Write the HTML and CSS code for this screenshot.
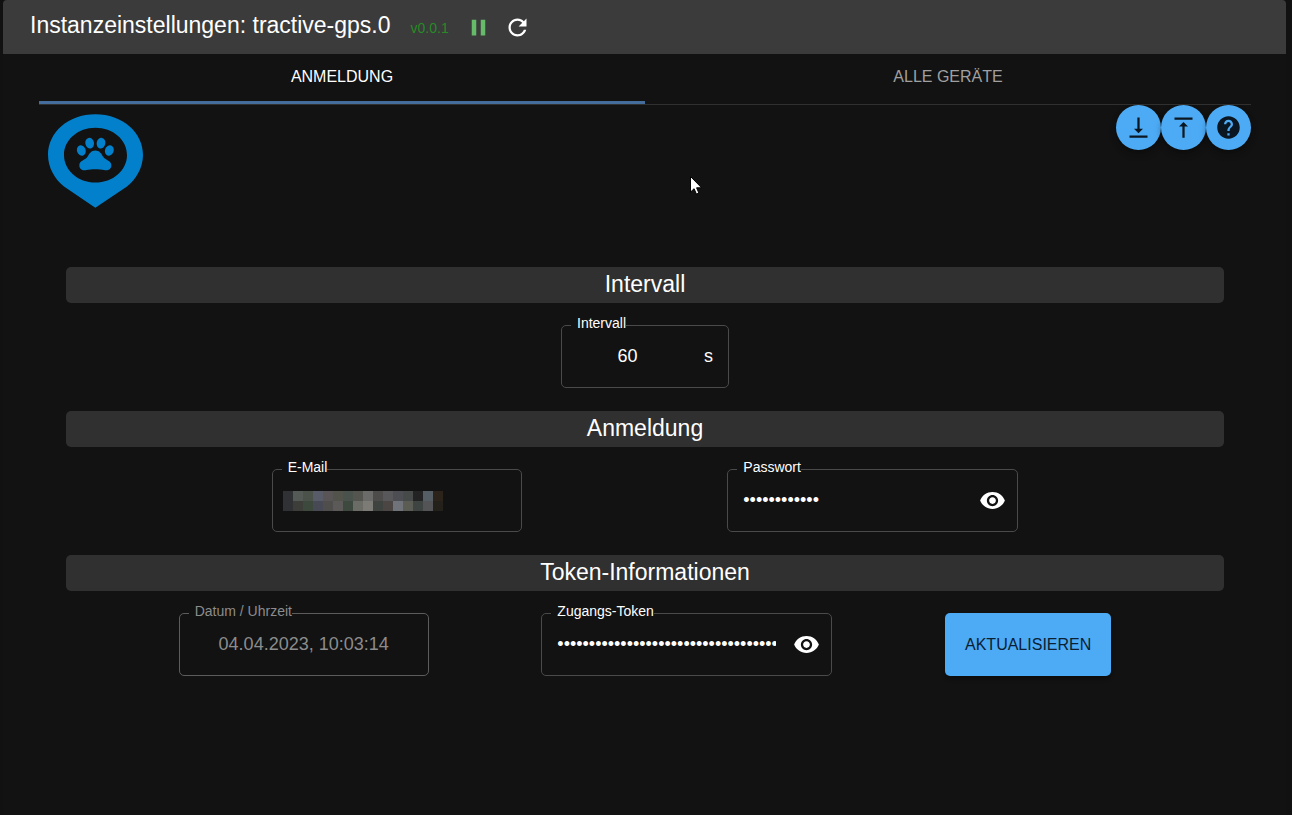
FILE: index.html
```html
<!DOCTYPE html>
<html lang="de">
<head>
<meta charset="utf-8">
<meta name="viewport" content="width=device-width, initial-scale=1">
<title>Instanzeinstellungen: tractive-gps.0</title>
<link rel="stylesheet" href="styles.css">
</head>
<body>
<div class="shell">
  <header class="header">
    <h1 class="title">Instanzeinstellungen: tractive-gps.0</h1>
    <span class="version">v0.0.1</span>
    <button class="icon-button pause" type="button" aria-label="Pause"><svg class="icon" viewBox="0 0 24 24"><path d="M6 19h4V5H6v14zm8-14v14h4V5h-4z"/></svg></button>
    <button class="icon-button" type="button" aria-label="Neu starten"><svg class="icon" viewBox="0 0 24 24"><path d="M17.65 6.35C16.2 4.9 14.21 4 12 4c-4.42 0-7.99 3.58-7.99 8s3.57 8 7.99 8c3.73 0 6.84-2.55 7.73-6h-2.08c-.82 2.33-3.04 4-5.65 4-3.31 0-6-2.69-6-6s2.69-6 6-6c1.66 0 3.14.69 4.22 1.78L13 11h7V4l-2.35 2.35z"/></svg></button>
  </header>

  <main class="content">
    <div class="tabs" role="tablist">
      <button class="tab tab-active" type="button" role="tab" aria-selected="true">ANMELDUNG</button>
      <button class="tab" type="button" role="tab" aria-selected="false">ALLE GERÄTE</button>
    </div>

    <div class="intro">
      <svg class="logo" viewBox="0 0 285 281" role="img" aria-label="Tractive GPS">
        <path fill-rule="evenodd" d="M142 0C224 0 285 55 285 122C285 160 265 195 237 217L142 281L48 217C20 195 0 160 0 122C0 55 60 0 142 0ZM142 41C90 41 48 77 48 123C48 168 90 205 142 205C195 205 237 168 237 123C237 77 195 41 142 41Z"/>
        <ellipse cx="100" cy="109" rx="13" ry="16" transform="rotate(-20 100 109)"/>
        <ellipse cx="125" cy="87" rx="13" ry="16" transform="rotate(-12 125 87)"/>
        <ellipse cx="159" cy="87" rx="13" ry="16" transform="rotate(12 159 87)"/>
        <ellipse cx="184" cy="109" rx="13" ry="16" transform="rotate(20 184 109)"/>
        <path d="M142 109C154 109 160 118 165 127C171 138 190 139 190 153C190 164 182 169 172 168C160 166 152 165 142 165C132 165 124 166 112 168C102 169 94 164 94 153C94 139 113 138 119 127C124 118 130 109 142 109Z"/>
      </svg>
      <div class="actions">
        <button class="fab" type="button" aria-label="Konfiguration speichern"><svg class="icon" viewBox="0 0 24 24"><path d="M16 13h-3V3h-2v10H8l4 4 4-4zM4 19v2h16v-2H4z"/></svg></button>
        <button class="fab" type="button" aria-label="Konfiguration laden"><svg class="icon" viewBox="0 0 24 24"><path d="M8 11h3v10h2V11h3l-4-4-4 4zM4 3v2h16V3H4z"/></svg></button>
        <button class="fab" type="button" aria-label="Hilfe"><svg class="icon" viewBox="0 0 24 24"><path d="M12 2C6.48 2 2 6.48 2 12s4.48 10 10 10 10-4.48 10-10S17.52 2 12 2zm1 17h-2v-2h2v2zm2.07-7.75l-.9.92C13.45 12.9 13 13.5 13 15h-2v-.5c0-1.1.45-2.1 1.17-2.83l1.24-1.26c.37-.36.59-.86.59-1.41 0-1.1-.9-2-2-2s-2 .9-2 2H8c0-2.21 1.79-4 4-4s4 1.79 4 4c0 .88-.36 1.68-.93 2.25z"/></svg></button>
      </div>
    </div>

    <form class="form">
      <section>
        <h2 class="section-title">Intervall</h2>
        <div class="row">
          <div class="field field-small">
            <label class="label" for="interval">Intervall</label>
            <input class="input centered" id="interval" type="text" inputmode="numeric" value="60">
            <span class="unit">s</span>
          </div>
        </div>
      </section>

      <section>
        <h2 class="section-title">Anmeldung</h2>
        <div class="row">
          <div class="field field-medium">
            <label class="label" for="email">E-Mail</label>
            <input class="input" id="email" type="email">
            <svg class="mosaic" viewBox="0 0 16 2" shape-rendering="crispEdges" aria-hidden="true">
              <path fill="#2f3134" d="M0 0h1v2h-1z"/>
              <path fill="#545a56" d="M1 0h1v1h-1z"/><path fill="#4b524a" d="M2 0h1v1h-1z"/><path fill="#585c68" d="M3 0h1v1h-1z"/><path fill="#595556" d="M4 0h1v1h-1z"/><path fill="#52534b" d="M5 0h1v1h-1z"/><path fill="#4a524d" d="M6 0h1v1h-1z"/><path fill="#55554f" d="M7 0h1v1h-1z"/><path fill="#6b6b69" d="M8 0h1v1h-1z"/><path fill="#4e4c4b" d="M9 0h1v1h-1z"/><path fill="#58585a" d="M10 0h1v1h-1z"/><path fill="#4c4e54" d="M11 0h1v1h-1z"/><path fill="#464a48" d="M12 0h1v1h-1z"/><path fill="#232323" d="M13 0h1v1h-1z"/><path fill="#555d65" d="M14 0h1v1h-1z"/><path fill="#2c241b" d="M15 0h1v1h-1z"/>
              <path fill="#3d3e39" d="M1 1h1v1h-1z"/><path fill="#3e493e" d="M2 1h1v1h-1z"/><path fill="#474a54" d="M3 1h1v1h-1z"/><path fill="#504d4d" d="M4 1h1v1h-1z"/><path fill="#5c5959" d="M5 1h1v1h-1z"/><path fill="#3d493e" d="M6 1h1v1h-1z"/><path fill="#6b6c66" d="M7 1h1v1h-1z"/><path fill="#7c7b76" d="M8 1h1v1h-1z"/><path fill="#3f433f" d="M9 1h1v1h-1z"/><path fill="#4b4543" d="M10 1h1v1h-1z"/><path fill="#707379" d="M11 1h1v1h-1z"/><path fill="#5b5c53" d="M12 1h1v1h-1z"/><path fill="#3e4442" d="M13 1h1v1h-1z"/><path fill="#545456" d="M14 1h1v1h-1z"/><path fill="#24211b" d="M15 1h1v1h-1z"/>
            </svg>
          </div>
          <div class="field field-large">
            <label class="label" for="password">Passwort</label>
            <input class="input" id="password" type="password" value="abcdefghijkl">
            <button class="icon-button" type="button" aria-label="Passwort anzeigen"><svg class="icon" viewBox="0 0 24 24"><path d="M12 4.5C7 4.5 2.73 7.61 1 12c1.73 4.39 6 7.5 11 7.5s9.27-3.11 11-7.5c-1.73-4.39-6-7.5-11-7.5zM12 17c-2.76 0-5-2.24-5-5s2.24-5 5-5 5 2.24 5 5-2.24 5-5 5zm0-8c-1.66 0-3 1.34-3 3s1.34 3 3 3 3-1.34 3-3-1.34-3-3-3z"/></svg></button>
          </div>
        </div>
      </section>

      <section>
        <h2 class="section-title">Token-Informationen</h2>
        <div class="row">
          <div class="field field-medium field-disabled">
            <label class="label" for="date">Datum / Uhrzeit</label>
            <input class="input centered" id="date" type="text" value="04.04.2023, 10:03:14" disabled>
          </div>
          <div class="field field-large">
            <label class="label" for="token">Zugangs-Token</label>
            <input class="input" id="token" type="password" value="abcdefghijklmnopqrstuvwxyzabcdefghijklmn">
            <button class="icon-button" type="button" aria-label="Token anzeigen"><svg class="icon" viewBox="0 0 24 24"><path d="M12 4.5C7 4.5 2.73 7.61 1 12c1.73 4.39 6 7.5 11 7.5s9.27-3.11 11-7.5c-1.73-4.39-6-7.5-11-7.5zM12 17c-2.76 0-5-2.24-5-5s2.24-5 5-5 5 2.24 5 5-2.24 5-5 5zm0-8c-1.66 0-3 1.34-3 3s1.34 3 3 3 3-1.34 3-3-1.34-3-3-3z"/></svg></button>
          </div>
          <button class="submit" type="button">AKTUALISIEREN</button>
        </div>
      </section>
    </form>
  </main>
</div>
<svg class="cursor" viewBox="0 0 12 19" aria-hidden="true"><path d="M.5.5v15.6l3.6-3.4 2.3 5.4 2.5-1-2.3-5.3h5z"/></svg>
</body>
</html>
```

FILE: styles.css
```css
* {
  box-sizing: border-box;
}

body {
  margin: 0;
  background: #111111;
  color: #ffffff;
  font-family: "Liberation Sans", Arial, sans-serif;
  font-size: 18px;
}

button,
input {
  font-family: inherit;
}

button {
  padding: 0;
  border: 0;
  background: none;
  color: inherit;
  cursor: pointer;
}

.shell {
  min-height: 100vh;
  margin: 0 6px 0 3px;
  background: #121212;
}

.header {
  display: flex;
  align-items: center;
  height: 54px;
  padding: 0 27px;
  border-radius: 4px 4px 0 0;
  background: #3b3b3b;
}

.title {
  margin: 0 20px 4px 0;
  font-size: 23px;
  font-weight: 400;
  line-height: 32px;
}

.version {
  margin-right: 16px;
  padding-top: 2px;
  color: #278a27;
  font-size: 14px;
  line-height: 20px;
}

.icon {
  display: block;
  width: 27px;
  height: 27px;
  fill: currentColor;
}

.icon-button {
  flex: none;
}

.pause {
  margin-right: 12px;
  color: #66bb6a;
}

.content {
  padding: 0 35px 0 36px;
}

.tabs {
  display: grid;
  grid-template-columns: 1fr 1fr;
  border-bottom: 1px solid #303030;
}

.tab {
  height: 50px;
  padding-bottom: 1px;
  border-bottom: 3px solid transparent;
  color: #a0a0a0;
  font-size: 16px;
}

.tab-active {
  border-bottom-color: #456d9c;
  color: #ffffff;
}

.intro {
  display: flex;
  align-items: flex-start;
  justify-content: space-between;
  min-height: 162px;
}

.logo {
  width: 95px;
  height: 94px;
  margin: 9px;
  fill: #0380cb;
}

.actions {
  display: flex;
}

.fab {
  display: grid;
  place-items: center;
  width: 45px;
  height: 45px;
  border-radius: 50%;
  background: #4dabf5;
  box-shadow: 0 3px 5px rgba(0, 0, 0, 0.2), 0 4px 8px rgba(0, 0, 0, 0.14);
  color: #0a1722;
}

.form {
  padding: 0 27px;
}

.section-title {
  margin: 0;
  border-radius: 5px;
  background: #303030;
  font-size: 23px;
  font-weight: 400;
  line-height: 34px;
  padding-bottom: 2px;
  text-align: center;
}

.row {
  display: flex;
  flex-wrap: wrap;
  justify-content: space-evenly;
  padding: 22px 0 23px;
}

.field {
  position: relative;
  display: flex;
  align-items: center;
  height: 63px;
  padding: 0 11px 0 15px;
  border: 1px solid #4a4a4a;
  border-radius: 5px;
}

.field-small {
  width: 168px;
  padding-right: 15px;
}

.field-medium {
  width: 250px;
  padding-right: 15px;
}

.field-large {
  width: 291px;
  gap: 17px;
}

.field-disabled {
  border-color: #5c5c5c;
  color: #8c8c8c;
}

.label {
  position: absolute;
  top: -11px;
  left: 9px;
  padding-left: 6px;
  background: #121212;
  font-size: 14px;
  line-height: 16px;
}

.input {
  flex: 1;
  min-width: 0;
  padding: 0 0 2px;
  border: 0;
  outline: 0;
  background: transparent;
  color: inherit;
  font-size: 18px;
  line-height: 24px;
}

.centered {
  text-align: center;
}

.unit {
  padding-left: 26px;
}

.mosaic {
  position: absolute;
  top: 21px;
  left: 10px;
  width: 160px;
  height: 20px;
}

.submit {
  height: 63px;
  padding: 0 20px;
  border-radius: 5px;
  background: #4dabf5;
  box-shadow: 0 3px 4px rgba(0, 0, 0, 0.3);
  color: #0b2033;
  font-size: 16px;
}

.cursor {
  position: absolute;
  top: 176px;
  left: 690px;
  width: 12px;
  height: 19px;
  fill: #ffffff;
  stroke: #000000;
  pointer-events: none;
}
```
